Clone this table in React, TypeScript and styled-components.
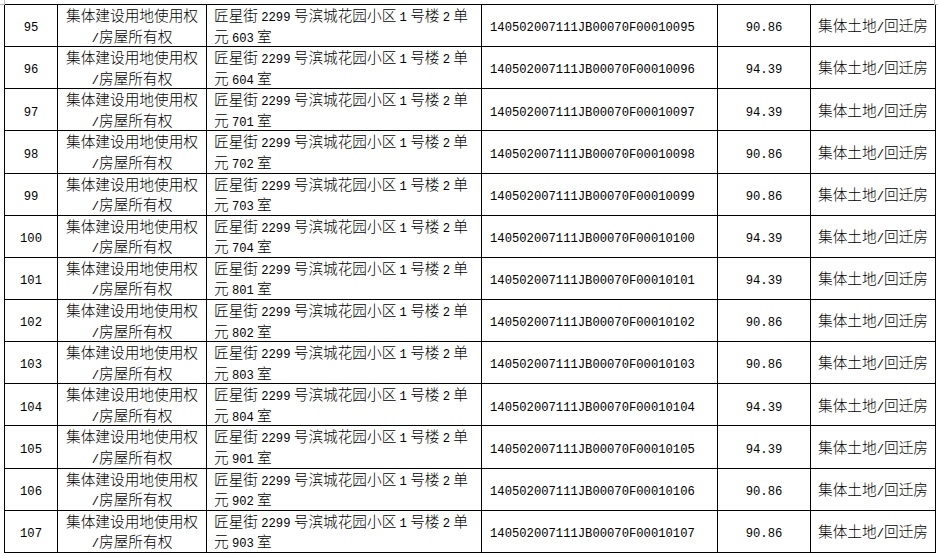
import React from "react";
import styled, { createGlobalStyle } from "styled-components";

const GlobalStyle = createGlobalStyle`
  html, body { margin: 0; padding: 0; background: #ffffff; }
  body { font-family: "Noto Sans CJK SC", "Noto Sans", sans-serif; color: #000; }
`;

const Page = styled.div`
  position: relative;
  padding: 4px 3px 0 4px;
  width: 938px;
  box-sizing: border-box;
  &::before, &::after {
    content: "";
    position: absolute;
    top: 0;
    width: 4px;
    height: 4px;
    border-color: #b8b8b8;
    border-style: solid;
  }
  &::before { left: 0; border-width: 0 1px 1px 0; }
  &::after { left: 934px; border-width: 0 0 1px 1px; }
`;

const Table = styled.table`
  border-collapse: collapse;
  table-layout: fixed;
  width: 932px;
  font-size: 14.67px;
`;

const Col = styled.col<{ $w: number }>`
  width: ${(p) => p.$w}px;
`;

const Row = styled.tr`
  height: 42.15px;
`;

const Cell = styled.td<{ $align?: "left" | "center"; $pad?: number }>`
  border: 1px solid #000;
  padding: 0 ${(p) => p.$pad ?? 2}px;
  text-align: ${(p) => p.$align ?? "center"};
  vertical-align: middle;
  line-height: 20px;
  white-space: nowrap;
  overflow: hidden;
  font-weight: 300;
`;

const Line = styled.div`
  height: 20.5px;
  line-height: 20.5px;
  overflow: visible;
`;

const Latin = styled.span`
  font-family: "Liberation Mono", monospace;
  font-size: 12.2px;
  font-weight: 400;
  line-height: 1;
`;

const mixed = (s: string) =>
  s.split(/([A-Za-z0-9./]+)/).map((part, i) =>
    /^[A-Za-z0-9./]+$/.test(part) ? <Latin key={i}>{part}</Latin> : part
  );

type Rec = { no: number; room: string; area: string };

const rows: Rec[] = [
  { no: 95, room: "603", area: "90.86" },
  { no: 96, room: "604", area: "94.39" },
  { no: 97, room: "701", area: "94.39" },
  { no: 98, room: "702", area: "90.86" },
  { no: 99, room: "703", area: "90.86" },
  { no: 100, room: "704", area: "94.39" },
  { no: 101, room: "801", area: "94.39" },
  { no: 102, room: "802", area: "90.86" },
  { no: 103, room: "803", area: "90.86" },
  { no: 104, room: "804", area: "94.39" },
  { no: 105, room: "901", area: "94.39" },
  { no: 106, room: "902", area: "90.86" },
  { no: 107, room: "903", area: "90.86" },
];

const widths = [53, 149, 275, 236, 93, 125];

export default function App() {
  return (
    <>
      <GlobalStyle />
      <Page>
        <Table>
          <colgroup>
            {widths.map((w, i) => (
              <Col key={i} $w={w} />
            ))}
          </colgroup>
          <tbody>
            {rows.map((r) => (
              <Row key={r.no}>
                <Cell>
                  <Line>{mixed(String(r.no))}</Line>
                </Cell>
                <Cell>
                  <Line>集体建设用地使用权</Line>
                  <Line>{mixed("/房屋所有权")}</Line>
                </Cell>
                <Cell $align="left" $pad={7}>
                  <Line>{mixed("匠星街 2299 号滨城花园小区 1 号楼 2 单")}</Line>
                  <Line>{mixed(`元 ${r.room} 室`)}</Line>
                </Cell>
                <Cell $align="left" $pad={8}>
                  <Line>
                    {mixed(`140502007111JB00070F0001${String(r.no).padStart(4, "0")}`)}
                  </Line>
                </Cell>
                <Cell>
                  <Line>{mixed(r.area)}</Line>
                </Cell>
                <Cell>
                  <Line>{mixed("集体土地/回迁房")}</Line>
                </Cell>
              </Row>
            ))}
          </tbody>
        </Table>
      </Page>
    </>
  );
}
